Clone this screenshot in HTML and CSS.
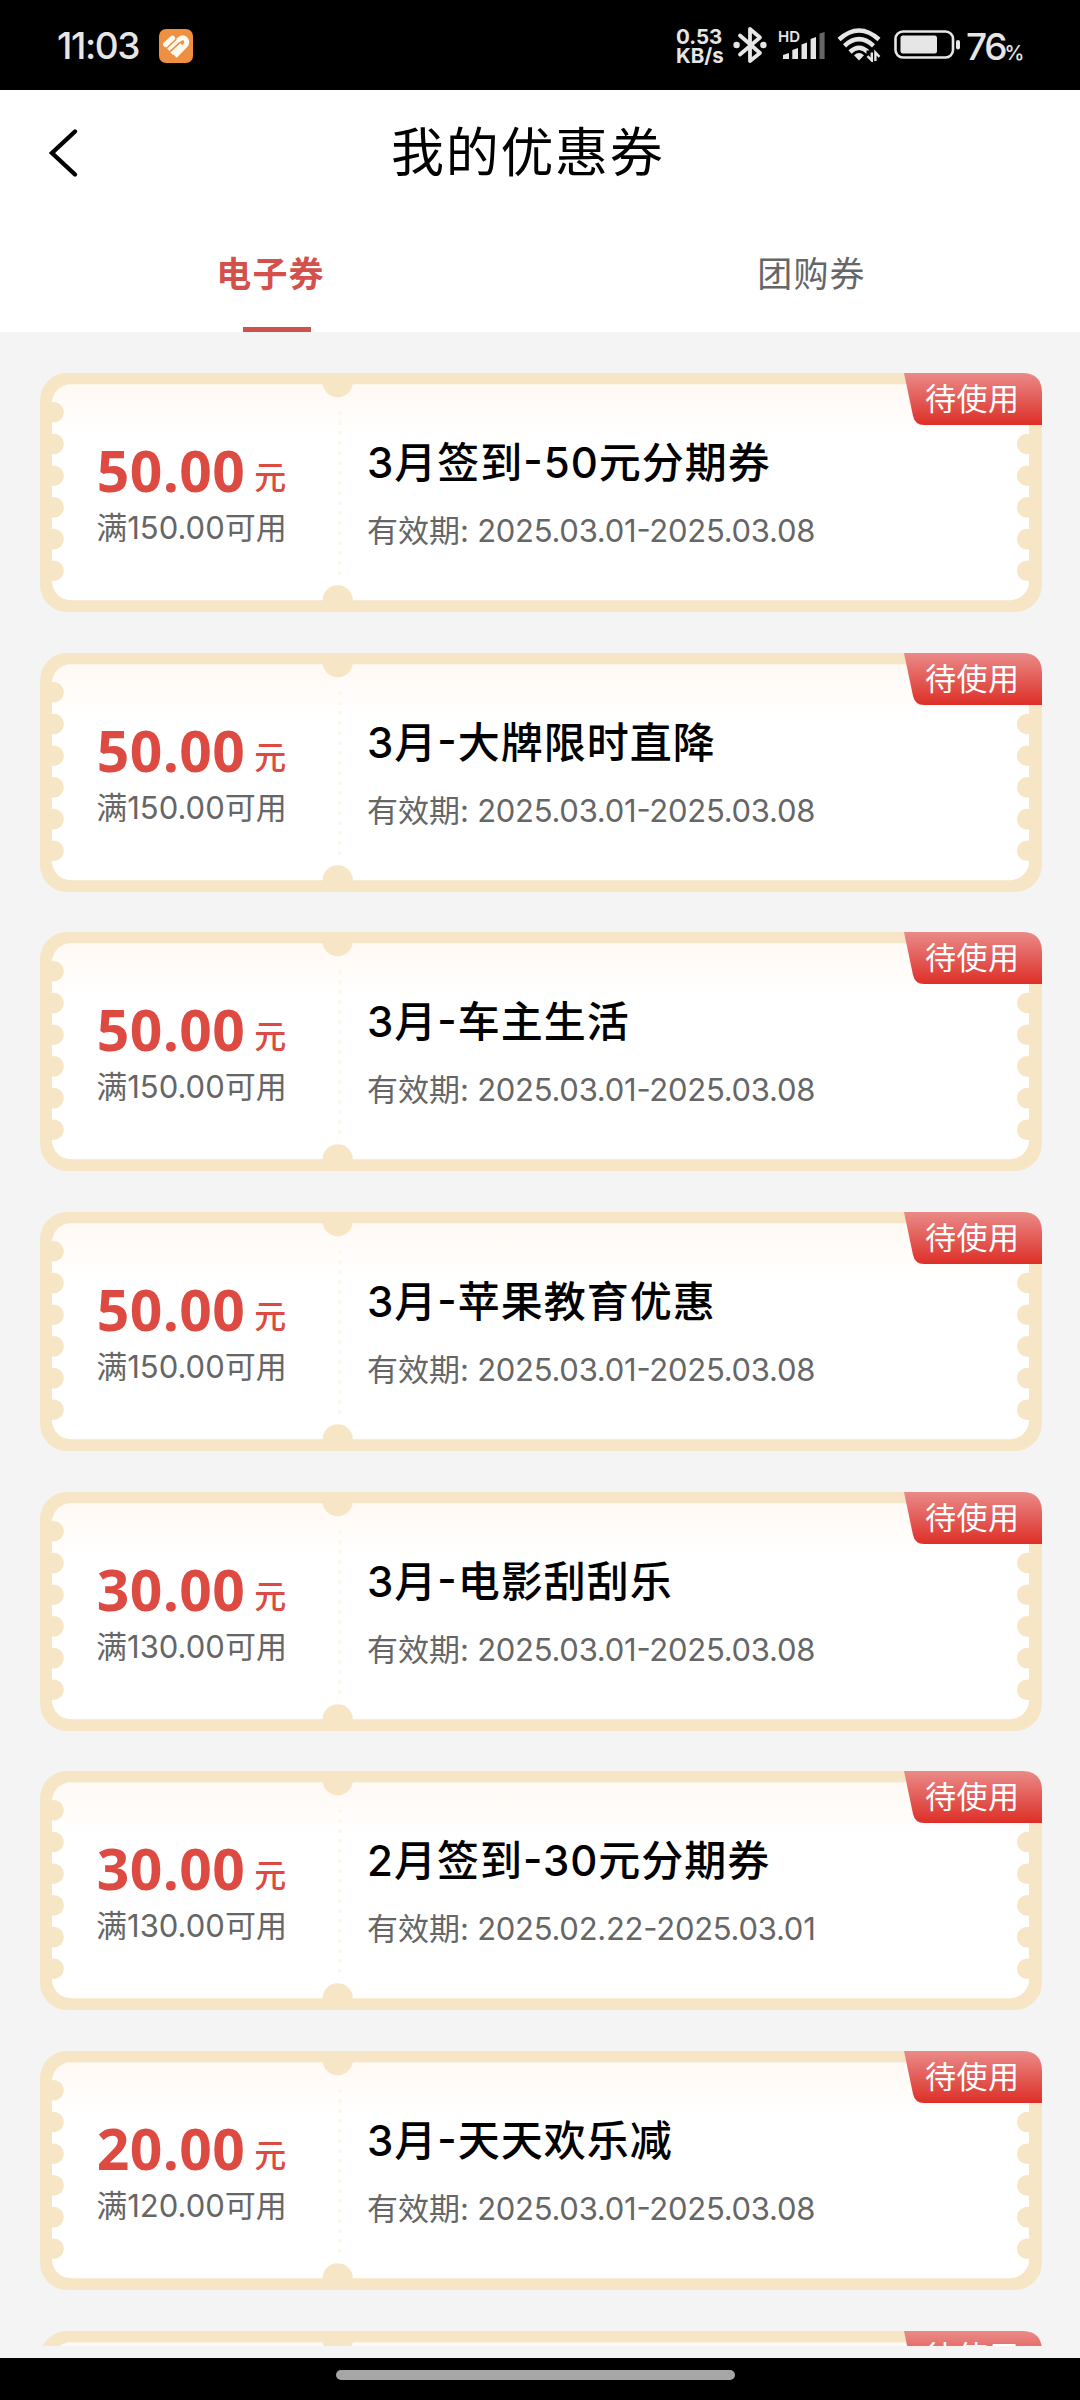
FILE: index.html
```html
<!DOCTYPE html>
<html lang="zh-CN">
<head>
<meta charset="utf-8">
<title>我的优惠券</title>
<link rel="stylesheet" href="styles.css">
</head>
<body>
<svg class="defs" width="0" height="0" aria-hidden="true">
  <defs>
    <linearGradient id="paper" x1="0" y1="0" x2="0" y2="1">
      <stop offset="0" stop-color="#fff9f4"/>
      <stop offset="0.25" stop-color="#ffffff"/>
    </linearGradient>
    <linearGradient id="red" x1="0" y1="0" x2="0" y2="1">
      <stop offset="0" stop-color="#ea8a88"/>
      <stop offset="1" stop-color="#dd2f27"/>
    </linearGradient>
    <g id="bumps">
      <circle cy="39.3" r="10.3"/><circle cy="71" r="10.3"/><circle cy="102.7" r="10.3"/>
      <circle cy="134.4" r="10.3"/><circle cy="166.1" r="10.3"/><circle cy="197.8" r="10.3"/>
    </g>
    <symbol id="ticket" viewBox="0 0 1002 239">
      <rect width="1002" height="239" rx="27" fill="#f7e6c6"/>
      <rect x="12" y="11.3" width="977" height="216" rx="19" fill="url(#paper)"/>
      <g fill="#f7e6c6">
        <use href="#bumps" x="13.6"/>
        <use href="#bumps" x="987.2"/>
        <circle cx="297.7" cy="9" r="15.2"/>
        <circle cx="297.7" cy="227.5" r="15.2"/>
      </g>
      <path d="M299.7 38V208" stroke="#fdf7ea" stroke-width="3.2" stroke-dasharray="4 6"/>
    </symbol>
    <symbol id="tag" viewBox="0 0 138 52">
      <path d="M0 0H118Q138 0 138 20V52H20Q11 52 9 43Z" fill="url(#red)"/>
    </symbol>
  </defs>
</svg>

<header class="status">
  <div class="status-left">
    <span class="clock">11:03</span>
    <svg class="app" viewBox="0 0 34 34">
      <rect width="34" height="34" rx="7" fill="#ee8f41"/>
      <g fill="none" stroke="#fffaf0" stroke-width="4.8" stroke-linecap="butt">
        <path d="M6.8 15.5L13.5 9.3" stroke-width="5.4" stroke-linecap="round"/>
        <path d="M8.8 20.4L20.6 10.2Q24 7.4 26.7 10.2Q29.2 13.2 26.2 16.6L16 27"/>
        <path d="M12.6 24.6L22.6 15.3" stroke-width="3.8"/>
      </g>
      <path d="M10.4 23.2L21 13.2M7.4 19.6L17.4 10" stroke="#ee8f41" stroke-width="1.4"/>
    </svg>
  </div>
  <div class="status-right">
    <div class="speed"><span>0.53</span><span>KB/s</span></div>
    <svg class="bt" viewBox="0 0 34 38">
      <path d="M7 9.5L27 27L17 35V3L27 11.5L7 28.5" fill="none" stroke="#e6e6e6" stroke-width="3.8" stroke-linejoin="round" stroke-linecap="round"/>
      <circle cx="3.6" cy="19" r="3.2" fill="#e6e6e6"/><circle cx="30.4" cy="19" r="3.2" fill="#e6e6e6"/>
    </svg>
    <div class="signal">
      <span class="hd">HD</span>
      <svg viewBox="0 0 42 28">
        <g fill="#e6e6e6"><path d="M0 23L6 21V27H0Z"/><path d="M9.3 18L15 16V27H9.3Z"/><path d="M18.5 12.5L24 10.5V27H18.5Z"/><path d="M27.6 7L33 5V27H27.6Z"/></g>
        <path d="M36.5 1.5L41.6 0V27H36.5Z" fill="#666"/>
      </svg>
    </div>
    <svg class="wifi" viewBox="0 0 44 34">
      <g fill="none" stroke="#e6e6e6" stroke-width="4.5">
        <path d="M2 11.5Q22 -6.5 42 11.5"/>
        <path d="M7.5 17.8Q22 4.5 36.5 17.8"/>
        <path d="M13 24Q22 15.5 31 24"/>
      </g>
      <path d="M17 27.2Q22 23 27 27.2L22 32.5Z" fill="#e6e6e6"/>
      <path d="M29.5 33V22.5H44V33Z" fill="#000"/>
      <path d="M34.8 24.5V32.5L30.5 28.2M38.4 33V24.5L42.5 28.8" fill="none" stroke="#e6e6e6" stroke-width="2.4"/>
    </svg>
    <svg class="battery" viewBox="0 0 66 30">
      <rect x="1.5" y="1.5" width="57.5" height="26" rx="7.5" fill="none" stroke="#e6e6e6" stroke-width="2.6"/>
      <rect x="6.5" y="5.5" width="36.5" height="18" rx="2.5" fill="#e6e6e6"/>
      <rect x="62" y="10" width="4" height="9.5" rx="2" fill="#e6e6e6"/>
    </svg>
    <span class="percent">76<small>%</small></span>
  </div>
</header>

<nav class="top">
  <div class="title-row">
    <svg class="back" viewBox="0 0 30 50"><path d="M26.5 3.5L3.5 25L26.5 46.5" fill="none" stroke="#000" stroke-width="4.4" stroke-linecap="round"/></svg>
    <h1>我的优惠券</h1>
  </div>
  <div class="tabs">
    <div class="tab active">电子券</div>
    <div class="tab">团购券</div>
  </div>
</nav>

<main class="list">
  <article class="coupon">
    <svg class="frame"><use href="#ticket"/></svg>
    <div class="value"><p class="amount"><b>50.00</b><i>元</i></p><p class="rule">满<span>150.00</span>可用</p></div>
    <div class="info"><h2>3月签到<em>-</em>50元分期券</h2><p>有效期<span>: 2025.03.01<em>-</em>2025.03.08</span></p></div>
    <div class="tag"><svg><use href="#tag"/></svg><span>待使用</span></div>
  </article>
  <article class="coupon">
    <svg class="frame"><use href="#ticket"/></svg>
    <div class="value"><p class="amount"><b>50.00</b><i>元</i></p><p class="rule">满<span>150.00</span>可用</p></div>
    <div class="info"><h2>3月<em>-</em>大牌限时直降</h2><p>有效期<span>: 2025.03.01<em>-</em>2025.03.08</span></p></div>
    <div class="tag"><svg><use href="#tag"/></svg><span>待使用</span></div>
  </article>
  <article class="coupon">
    <svg class="frame"><use href="#ticket"/></svg>
    <div class="value"><p class="amount"><b>50.00</b><i>元</i></p><p class="rule">满<span>150.00</span>可用</p></div>
    <div class="info"><h2>3月<em>-</em>车主生活</h2><p>有效期<span>: 2025.03.01<em>-</em>2025.03.08</span></p></div>
    <div class="tag"><svg><use href="#tag"/></svg><span>待使用</span></div>
  </article>
  <article class="coupon">
    <svg class="frame"><use href="#ticket"/></svg>
    <div class="value"><p class="amount"><b>50.00</b><i>元</i></p><p class="rule">满<span>150.00</span>可用</p></div>
    <div class="info"><h2>3月<em>-</em>苹果教育优惠</h2><p>有效期<span>: 2025.03.01<em>-</em>2025.03.08</span></p></div>
    <div class="tag"><svg><use href="#tag"/></svg><span>待使用</span></div>
  </article>
  <article class="coupon">
    <svg class="frame"><use href="#ticket"/></svg>
    <div class="value"><p class="amount"><b>30.00</b><i>元</i></p><p class="rule">满<span>130.00</span>可用</p></div>
    <div class="info"><h2>3月<em>-</em>电影刮刮乐</h2><p>有效期<span>: 2025.03.01<em>-</em>2025.03.08</span></p></div>
    <div class="tag"><svg><use href="#tag"/></svg><span>待使用</span></div>
  </article>
  <article class="coupon">
    <svg class="frame"><use href="#ticket"/></svg>
    <div class="value"><p class="amount"><b>30.00</b><i>元</i></p><p class="rule">满<span>130.00</span>可用</p></div>
    <div class="info"><h2>2月签到<em>-</em>30元分期券</h2><p>有效期<span>: 2025.02.22<em>-</em>2025.03.01</span></p></div>
    <div class="tag"><svg><use href="#tag"/></svg><span>待使用</span></div>
  </article>
  <article class="coupon">
    <svg class="frame"><use href="#ticket"/></svg>
    <div class="value"><p class="amount"><b>20.00</b><i>元</i></p><p class="rule">满<span>120.00</span>可用</p></div>
    <div class="info"><h2>3月<em>-</em>天天欢乐减</h2><p>有效期<span>: 2025.03.01<em>-</em>2025.03.08</span></p></div>
    <div class="tag"><svg><use href="#tag"/></svg><span>待使用</span></div>
  </article>
  <article class="coupon">
    <svg class="frame"><use href="#ticket"/></svg>
    <div class="tag"><svg><use href="#tag"/></svg><span>待使用</span></div>
  </article>
</main>

<footer class="gesture"><span></span></footer>
</body>
</html>
```
FILE: styles.css
```css
* { box-sizing: border-box; margin: 0; padding: 0; }
body {
  width: 1080px;
  height: 2400px;
  overflow: hidden;
  display: flex;
  flex-direction: column;
  background: #f4f4f4;
  font-family: Inter, "Noto Sans CJK SC", sans-serif;
}
svg { display: block; flex: none; }
.defs { position: absolute; }
i, em { font-style: normal; }

/* status bar */
.status {
  flex: none;
  height: 90px;
  background: #000;
  color: #e6e6e6;
  display: flex;
  justify-content: space-between;
  padding: 0 57px 0 57px;
}
.status-left, .status-right { display: flex; align-items: center; }
.clock { font-size: 37px; font-weight: 500; line-height: 90px; width: 102px; padding-top: 2px; letter-spacing: -1.4px; }
.app { width: 34px; height: 34px; margin-top: 2px; }
.speed {
  display: flex;
  flex-direction: column;
  width: 57px;
  padding-top: 2px;
  font-size: 20.5px;
  font-weight: 700;
  line-height: 19px;
}
.bt { width: 34px; height: 38px; margin-right: 16px; }
.signal { display: flex; position: relative; width: 42px; height: 28px; margin: 1px 12px 0 0; }
.signal svg { width: 42px; height: 28px; }
.hd { position: absolute; left: -5px; top: -3px; font-size: 15px; line-height: 15px; font-weight: 600; }
.wifi { width: 44px; height: 34px; margin-right: 13px; }
.battery { width: 66px; height: 30px; margin-right: 6px; }
.percent { width: 57px; font-size: 37px; font-weight: 500; letter-spacing: -2.2px; white-space: nowrap; padding-top: 2px; }
.percent small { font-size: 20px; letter-spacing: 0; margin-left: -1px; }

/* page header */
.top { flex: none; height: 242px; background: #fff; }
.title-row { display: flex; align-items: center; height: 126px; padding-left: 47px; }
.back { width: 33px; height: 50px; }
h1 { margin-left: 311px; font-size: 53px; font-weight: 400; letter-spacing: 1.7px; line-height: 60px; }
.tabs { display: flex; height: 116px; }
.tab {
  flex: 1;
  display: flex;
  flex-direction: column;
  align-items: center;
  font-size: 35px;
  line-height: 117px;
  letter-spacing: 1.2px;
  padding-left: 4px;
  color: #666;
}
.tab.active { color: #d4504a; font-weight: 700; padding-left: 2px; }
.tab.active::after { content: ""; width: 68px; height: 5px; margin: -6px 0 0 12px; background: #d0524c; }

/* coupons */
.list {
  height: 2014px;
  overflow: hidden;
  display: flex;
  flex-direction: column;
  gap: 40.7px;
  padding: 41px 38px 0 40px;
}
.coupon { flex: none; position: relative; height: 239px; display: flex; }
.frame { position: absolute; left: 0; top: 0; width: 1002px; height: 239px; }
.value { position: relative; width: 303px; padding-top: 64px; text-align: center; }
.amount { display: flex; justify-content: center; align-items: baseline; height: 69px; line-height: 66px; color: #dc4a42; }
.amount b { font-family: "Open Sans", sans-serif; font-size: 57px; font-weight: 700; letter-spacing: 0.4px; }
.amount i { position: relative; top: -3px; font-size: 32px; font-weight: 500; margin-left: 9px; }
.rule { font-size: 31px; line-height: 44px; color: #666; white-space: nowrap; }
.info { position: relative; padding: 61px 0 0 24px; white-space: nowrap; }
.info h2 { font-size: 42px; font-weight: 500; line-height: 58px; letter-spacing: 1px; color: #000; }
.info p { margin-top: 17px; font-size: 31px; line-height: 44px; color: #666; }
.info p span { letter-spacing: -0.26px; }
.info em { position: relative; top: -0.06em; }
.tag { position: absolute; right: 0; top: 0; width: 138px; height: 52px; display: flex; color: #fff; }
.tag svg { position: absolute; width: 138px; height: 52px; }
.tag span { position: relative; padding-left: 21px; font-size: 31px; line-height: 51px; letter-spacing: 0.5px; }

/* gesture bar */
.gesture { flex: none; height: 42px; margin-top: auto; background: #000; display: flex; justify-content: center; align-items: flex-start; }
.gesture span { width: 399px; height: 10px; margin: 12px 0 0 -9px; border-radius: 5px; background: #a6a6a6; }
```
